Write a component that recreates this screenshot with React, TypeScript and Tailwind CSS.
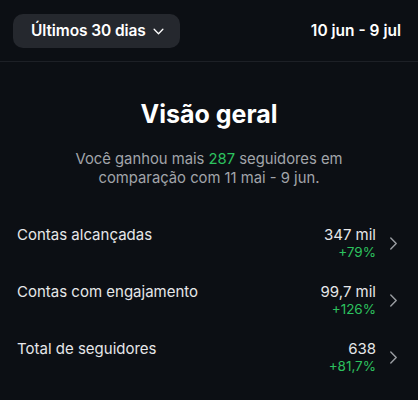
import React from 'react'

const rows = [
  { label: 'Contas alcançadas', value: '347 mil', change: '+79%' },
  { label: 'Contas com engajamento', value: '99,7 mil', change: '+126%' },
  { label: 'Total de seguidores', value: '638', change: '+81,7%' },
]

function Chevron({ className }: { className?: string }) {
  return (
    <svg viewBox="0 0 10 16" className={className} fill="none" stroke="currentColor" strokeWidth="1.6" strokeLinecap="round" strokeLinejoin="round">
      <path d="M2 2l6 6-6 6" />
    </svg>
  )
}

export default function App() {
  return (
    <div className="w-[418px] h-[400px] bg-[#0c0f14] text-white overflow-hidden" style={{ fontFamily: 'Inter, "Noto Sans", sans-serif' }}>
      <div className="h-[62px] flex items-center justify-between pl-[13px] pr-[17px] border-b border-[#1d2026]">
        <button className="h-[34px] w-[167px] rounded-[10px] bg-[#25282e] flex items-center pl-[18px] gap-[7px]">
          <span className="text-[15.5px] font-semibold tracking-[-0.1px]">Últimos 30 dias</span>
          <svg viewBox="0 0 12 8" className="w-[11px] h-[7px] mt-[1px]" fill="none" stroke="currentColor" strokeWidth="1.5" strokeLinecap="round" strokeLinejoin="round">
            <path d="M1 1.5l5 5 5-5" />
          </svg>
        </button>
        <span className="text-[15.5px] font-semibold">10 jun - 9 jul</span>
      </div>

      <div className="pt-[35px] flex flex-col items-center">
        <h1 className="text-[25px] font-bold leading-[34px]">Visão geral</h1>
        <p className="mt-[19px] text-[14.8px] leading-[19px] text-[#a2a5aa] text-center">
          Você ganhou mais <span className="text-[#2cc25f]">287</span> seguidores em
          <br />
          comparação com 11 mai - 9 jun.
        </p>
      </div>

      <div className="mt-[37px] flex flex-col gap-[21px] pl-[17px] pr-[20px]">
        {rows.map((r) => (
          <div key={r.label} className="flex items-start">
            <span className="flex-1 text-[15px] leading-[20px] text-[#e6e7e9]">{r.label}</span>
            <div className="flex flex-col items-end">
              <span className="text-[15px] leading-[19px] text-[#e6e7e9]">{r.value}</span>
              <span className="text-[13.5px] leading-[17px] text-[#2cc25f]">{r.change}</span>
            </div>
            <Chevron className="w-[9px] h-[15px] ml-[13px] mt-[11px] text-[#9a9da2]" />
          </div>
        ))}
      </div>
    </div>
  )
}
